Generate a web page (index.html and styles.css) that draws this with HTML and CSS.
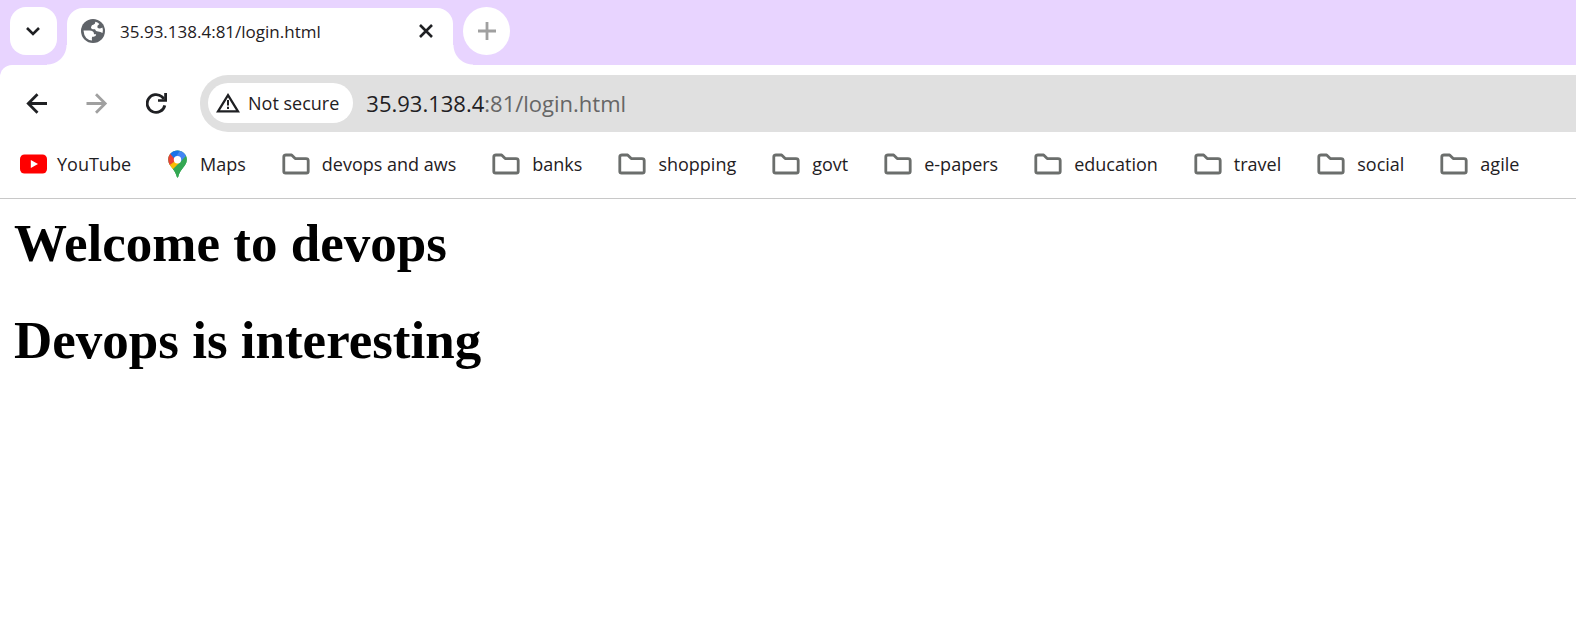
FILE: index.html
```html
<!DOCTYPE html>
<html lang="en">
<head>
<meta charset="utf-8">
<meta name="viewport" content="width=device-width, initial-scale=1">
<title>35.93.138.4:81/login.html</title>
<link rel="stylesheet" href="styles.css">
</head>
<body>
<svg class="symbols" aria-hidden="true">
  <symbol id="folder" viewBox="0 0 28 24"><path d="M4 3H9.6L13.2 6.6H24Q26.2 6.6 26.2 8.6V19.4Q26.2 21 24.4 21H3.6Q1.8 21 1.8 19.4V4.8Q1.8 3 4 3Z" fill="none" stroke="#6b6e6c" stroke-width="2.8" stroke-linejoin="round"/></symbol>
</svg>
<header class="browser">
  <div class="tab-strip">
    <button class="tab-search" type="button" aria-label="Search tabs">
      <svg width="16" height="10" viewBox="0 0 16 10"><path d="M2 2L8 8L14 2" fill="none" stroke="#1f2023" stroke-width="2.6"/></svg>
    </button>
    <div class="tab">
      <svg class="globe" width="24" height="24" viewBox="0 0 24 24"><circle cx="12" cy="12" r="12" fill="#5f6368"/><path d="M2.5 11.5H8.5Q13 11.5 13 15.2H15.2Q15.2 17.6 12.6 17.8H11.2Q10.6 19 11 21.6Q3.2 20.6 2.5 11.5ZM14.3 2.8Q14.4 5 12.8 5.6Q10.4 5.6 10 8.2Q10 10.2 13 10.2H14Q14.6 12.6 17 12.6Q19.6 12.8 21.5 14Q22.4 11 21.4 8.6Q18 10.4 16.4 8.4Q15.6 6.8 18.4 5Q16.6 3.4 14.3 2.8Z" fill="#fff"/></svg>
      <span class="tab-title">35.93.138.4:81/login.html</span>
      <button class="tab-close" type="button" aria-label="Close tab">
        <svg width="14" height="14" viewBox="0 0 14 14"><path d="M1 1L13 13M13 1L1 13" fill="none" stroke="#1f2023" stroke-width="2.6"/></svg>
      </button>
    </div>
    <button class="new-tab" type="button" aria-label="New tab">
      <svg width="18" height="18" viewBox="0 0 18 18"><path d="M9 0V18M0 9H18" fill="none" stroke="#a0a0a0" stroke-width="2.8"/></svg>
    </button>
  </div>
  <div class="toolbar">
    <nav class="controls" aria-label="History">
      <button type="button" aria-label="Back"><svg width="22" height="22" viewBox="0 0 22 22"><path d="M21 10.5H3M11.5 1.3L2.3 10.5L11.5 19.7" fill="none" stroke="#1f2023" stroke-width="2.8"/></svg></button>
      <button type="button" aria-label="Forward" disabled><svg width="22" height="22" viewBox="0 0 22 22"><path d="M0.5 10.5H18.5M10 1.3L19.2 10.5L10 19.7" fill="none" stroke="#a0a0a0" stroke-width="2.8"/></svg></button>
      <button type="button" aria-label="Reload"><svg width="22" height="22" viewBox="0 0 22 22"><path d="M18.8 12.4A8.9 8.9 0 1 1 16 3.8L18 6" fill="none" stroke="#1f2023" stroke-width="2.8"/><path d="M21 0V8.8H12V6.2H18.2V0Z" fill="#1f2023"/></svg></button>
    </nav>
    <div class="address">
      <button class="security" type="button">
        <svg width="24" height="20" viewBox="0 0 24 20"><path d="M12 2.2L22 18.4H2Z" fill="none" stroke="#1f2023" stroke-width="2.3"/><path d="M12 7V12.4M12 13.8V16" stroke="#1f2023" stroke-width="2"/></svg>
        <span>Not secure</span>
      </button>
      <a class="url" href="#">35.93.138.4<span class="path">:81/login.html</span></a>
    </div>
  </div>
  <nav class="bookmarks" aria-label="Bookmarks">
    <a href="#"><svg class="site" width="27" height="20" viewBox="0 0 27 20"><rect y="0.5" width="27" height="19" rx="4.5" fill="#f00"/><path d="M10.8 6L18 10L10.8 14Z" fill="#fff"/></svg>YouTube</a>
    <a href="#"><svg class="site" width="23" height="28" viewBox="-1 0 23 28">
      <clipPath id="pin"><path d="M9.5 0.5C4.3 0.5 0.2 4.5 0.2 9.6C0.2 13.6 2.2 15.7 4.3 18.2C6.6 21 7.6 22.8 8.4 25.6C8.7 27 9 27.6 9.5 27.6C10 27.6 10.3 27 10.6 25.6C11.4 22.8 12.4 21 14.7 18.2C16.8 15.7 18.8 13.6 18.8 9.6C18.8 4.5 14.7 0.5 9.5 0.5Z"/></clipPath>
      <g clip-path="url(#pin)"><path d="M-1 -1H20V28H-1Z" fill="#34a853"/><path d="M0.6 14.8L6.5 8L13 12L4.2 20L-1 20Z" fill="#fbbc04"/><path d="M-1 2L3 3.5L9.5 9.5L1 15.5L-1 12Z" fill="#ea4335"/><path d="M2.2 3.8L0 0H12.4L6.8 9.2Z" fill="#1a73e8"/><path d="M12.4 0H20V6H18.2L11.6 13.8L7 8Z" fill="#4285f4"/><path d="M18.3 5.8L4.2 20L10 29L20 20V6Z" fill="#34a853"/></g><circle cx="9.5" cy="9.8" r="3.7" fill="#fff"/></svg>Maps</a>
    <a class="group" href="#"><svg width="28" height="24"><use href="#folder"/></svg>devops and aws</a>
    <a class="group" href="#"><svg width="28" height="24"><use href="#folder"/></svg>banks</a>
    <a class="group" href="#"><svg width="28" height="24"><use href="#folder"/></svg>shopping</a>
    <a class="group" href="#"><svg width="28" height="24"><use href="#folder"/></svg>govt</a>
    <a class="group" href="#"><svg width="28" height="24"><use href="#folder"/></svg>e-papers</a>
    <a class="group" href="#"><svg width="28" height="24"><use href="#folder"/></svg>education</a>
    <a class="group" href="#"><svg width="28" height="24"><use href="#folder"/></svg>travel</a>
    <a class="group" href="#"><svg width="28" height="24"><use href="#folder"/></svg>social</a>
    <a class="group" href="#"><svg width="28" height="24"><use href="#folder"/></svg>agile</a>
  </nav>
</header>
<main class="page">
  <h1>Welcome to devops</h1>
  <h1>Devops is interesting</h1>
</main>
</body>
</html>
```
FILE: styles.css
```css
* { box-sizing: border-box; }
body {
  margin: 0;
  background: #fff;
  color: #1f2023;
  font-family: "Open Sans", "Noto Sans", sans-serif;
  font-size: 18px;
}
button {
  display: flex;
  align-items: center;
  justify-content: center;
  padding: 0;
  border: 0;
  background: none;
  color: inherit;
  font: inherit;
}
a { color: inherit; text-decoration: none; }
svg { flex: none; display: block; }
.symbols { position: absolute; width: 0; height: 0; }
.browser { background: #e8d4ff; }

.tab-strip {
  display: flex;
  align-items: flex-start;
  gap: 10px;
  padding: 7px 10px 0;
  height: 65px;
}
.tab-search, .new-tab {
  width: 47px;
  height: 48px;
  background: #fff;
  border-radius: 16px;
}
.tab-search { padding-right: 1px; }
.new-tab { border-radius: 50%; }
.tab {
  position: relative;
  display: flex;
  align-items: center;
  width: 386px;
  height: 57px;
  margin-top: 1px;
  padding: 0 20px 11px 14px;
  background: #fff;
  border-radius: 16px 16px 0 0;
}
.tab::before, .tab::after {
  content: "";
  position: absolute;
  bottom: 0;
  width: 20px;
  height: 20px;
}
.tab::before {
  right: 100%;
  background: radial-gradient(circle at 0 0, transparent 19px, #fff 20px);
}
.tab::after {
  left: 100%;
  background: radial-gradient(circle at 100% 0, transparent 19px, #fff 20px);
}
.tab-title { flex: 1; margin-left: 15px; font-size: 17px; font-weight: 500; }

.toolbar {
  display: flex;
  align-items: center;
  gap: 32px;
  padding: 10px 0 0 26px;
  background: #fff;
  border-radius: 12px 0 0 0;
}
.controls { display: flex; gap: 38px; }
.address {
  flex: 1;
  display: flex;
  align-items: center;
  gap: 13px;
  height: 57px;
  padding: 0 0 1px 8px;
  background: #e0e0e0;
  border-radius: 28px 0 0 28px;
}
.security {
  gap: 8px;
  height: 40px;
  padding: 0 14px 1px 8px;
  background: #fff;
  border-radius: 20px;
}
.url { font-size: 22px; }
.path { color: #666; }

.bookmarks {
  display: flex;
  align-items: center;
  gap: 36px;
  height: 67px;
  padding: 0 0 2px 20px;
  background: #fff;
  border-bottom: 1px solid #c8c8c8;
  white-space: nowrap;
}
.bookmarks a { display: flex; align-items: center; gap: 10px; }
.bookmarks .group { gap: 12px; }

.page { padding: 14px; color: #000; font-family: "Liberation Serif", serif; }
.page h1 { margin: 0 0 36px; font-size: 53px; line-height: 61px; }
```
